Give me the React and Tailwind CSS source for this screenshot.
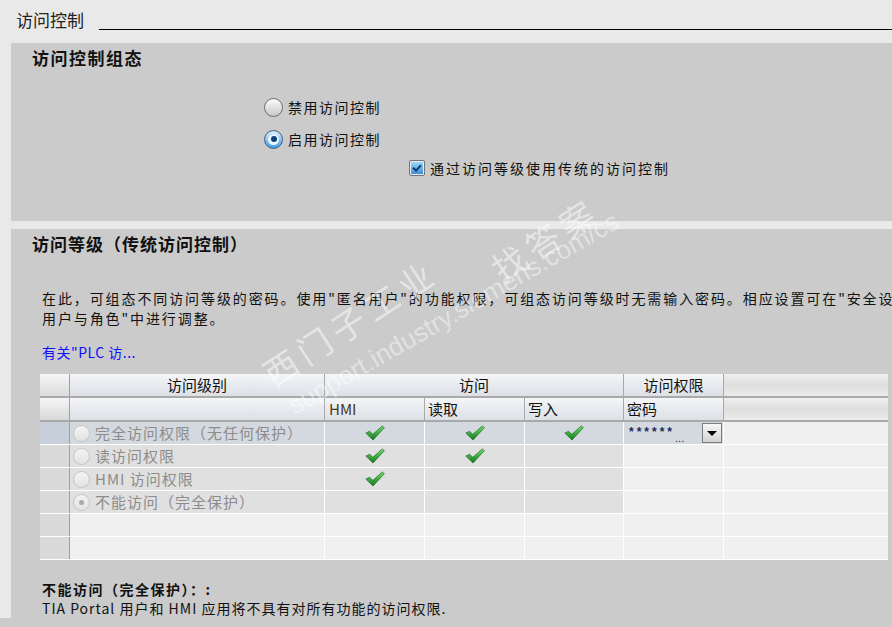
import React from "react";

const font = "font-['Noto_Sans_CJK_SC','Noto_Sans',sans-serif]";

const Radio = ({ checked, disabled }) => {
  if (disabled) {
    return (
      <div className="w-[17px] h-[17px] rounded-full border border-[#c4c4c4] bg-linear-to-b from-[#f4f4f4] to-[#e2e2e2] flex items-center justify-center shrink-0">
        {checked && <div className="w-[5px] h-[5px] rounded-full bg-[#a9a9a9]" />}
      </div>
    );
  }
  if (checked) {
    return (
      <div className="w-[19px] h-[19px] rounded-full border border-[#45607c] bg-linear-to-b from-[#d6f0ff] to-[#3a9be0] flex items-center justify-center shrink-0">
        <div className="w-[11px] h-[11px] rounded-full bg-[#eaf6ff] flex items-center justify-center">
          <div className="w-[6px] h-[6px] rounded-full bg-[#0f3f7c]" />
        </div>
      </div>
    );
  }
  return (
    <div className="w-[19px] h-[19px] rounded-full border border-[#6e6e6e] bg-linear-to-b from-[#fbfbfb] to-[#c9c9c9] shrink-0" />
  );
};

const Check = () => (
  <svg width="20" height="16" viewBox="0 0 19 15">
    <defs>
      <linearGradient id="gk" x1="0" y1="0" x2="0" y2="1">
        <stop offset="0" stopColor="#6ee06e" />
        <stop offset="1" stopColor="#117a1a" />
      </linearGradient>
    </defs>
    <path d="M0.8 7.6 L4.4 5.8 L7.4 8.8 L16.4 0.8 L18.4 2.4 L7.6 14.2 Z" fill="url(#gk)" stroke="#1b5e20" strokeWidth="0.6" />
  </svg>
);

const cols = "grid grid-cols-[30px_255px_100px_100px_99px_100px_164px]";

const rows = [
  { label: "完全访问权限（无任何保护）", hmi: true, read: true, write: true, pw: true, sel: true },
  { label: "读访问权限", hmi: true, read: true },
  { label: "HMI 访问权限", hmi: true },
  { label: "不能访问（完全保护）", checked: true },
];

const hdr = "bg-linear-to-b from-[#f5f6f8] via-[#e7eaee] to-[#dde1e6]";

const Table = () => (
  <div className="ml-[29px] w-[848px] text-[15px] leading-[20px] text-[#111]">
    {/* header row 1 */}
    <div className={`${cols} h-[24px] border-b-2 border-[#a9a9a9]`}>
      <div className="bg-linear-to-b from-[#f6f6f6] to-[#dcdcdc] border-r border-[#a0a0a0]" />
      <div className={`${hdr} border-r border-[#a9a9a9] flex items-center justify-center`}>访问级别</div>
      <div className={`${hdr} col-span-3 border-r border-[#a9a9a9] flex items-center justify-center`}>访问</div>
      <div className={`${hdr} border-r border-[#a9a9a9] flex items-center justify-center`}>访问权限</div>
      <div className="bg-linear-to-b from-[#f0f0f0] via-[#dedede] to-[#ececec]" />
    </div>
    {/* header row 2 */}
    <div className={`${cols} h-[24px] border-b-2 border-[#a9a9a9]`}>
      <div className="bg-linear-to-b from-[#f6f6f6] to-[#d8d8d8] border-r border-[#a0a0a0]" />
      <div className={`${hdr} border-r border-[#a9a9a9]`} />
      <div className={`${hdr} border-r border-[#a9a9a9] flex items-center pl-[4px] text-[#4a3a1a]`}>HMI</div>
      <div className={`${hdr} border-r border-[#a9a9a9] flex items-center pl-[3px]`}>读取</div>
      <div className={`${hdr} border-r border-[#a9a9a9] flex items-center pl-[3px]`}>写入</div>
      <div className={`${hdr} border-r border-[#a9a9a9] flex items-center pl-[3px]`}>密码</div>
      <div className="bg-linear-to-b from-[#f0f0f0] via-[#dedede] to-[#ececec]" />
    </div>
    {rows.map((r, i) => {
      const cell = r.sel ? "bg-[#d4d9df]" : "bg-[#e0e0e0]";
      return (
        <div key={i} className={`${cols} h-[23px] border-b border-white`}>
          <div className={`${r.sel ? "bg-[#c7d0da]" : "bg-[#dadada]"} border-r border-[#a0a0a0]`} />
          <div className={`${cell} border-r border-white flex items-center gap-[5px] pl-[3px] text-[#8c8c8c] tracking-[1px]`}>
            <Radio disabled checked={r.checked} />
            <span>{r.label}</span>
          </div>
          <div className={`${cell} border-r border-white flex items-center justify-center`}>{r.hmi && <Check />}</div>
          <div className={`${cell} border-r border-white flex items-center justify-center`}>{r.read && <Check />}</div>
          <div className={`${cell} border-r border-white flex items-center justify-center`}>{r.write && <Check />}</div>
          <div className={`${r.sel ? "bg-[#d4d9df]" : "bg-[#f0f0f0]"} border-r border-white flex items-start justify-between`}>
            {r.pw && (
              <>
                <span className="pl-[5px] pt-[4px] flex items-end font-['Liberation_Sans',sans-serif] text-[#1f2a5a]">
                  <span className="text-[12px] leading-[12px] tracking-[3px] font-bold">******</span>
                  <span className="text-[11px] leading-[12px] -mb-[6px]">...</span>
                </span>
                <div className="mt-[1px] mr-[1px] w-[20px] h-[20px] border border-[#7c7c7c] bg-linear-to-b from-[#f7f7f7] to-[#d3d3d3] flex items-center justify-center">
                  <div className="w-0 h-0 border-l-[5px] border-r-[5px] border-t-[5px] border-l-transparent border-r-transparent border-t-black" />
                </div>
              </>
            )}
          </div>
          <div className="bg-[#f0f0f0]" />
        </div>
      );
    })}
    {[0, 1].map((i) => (
      <div key={i} className={`${cols} h-[23px] border-b border-white`}>
        <div className="bg-[#dadada] border-r border-[#a0a0a0]" />
        <div className="bg-[#f0f0f0] border-r border-white" />
        <div className="bg-[#f0f0f0] border-r border-white" />
        <div className="bg-[#f0f0f0] border-r border-white" />
        <div className="bg-[#f0f0f0] border-r border-white" />
        <div className="bg-[#f0f0f0] border-r border-white" />
        <div className="bg-[#f0f0f0]" />
      </div>
    ))}
  </div>
);

export default function App() {
  return (
    <div className={`relative w-[892px] h-[627px] overflow-hidden bg-[#e9e9e9] flex flex-col ${font}`}>
      {/* page title */}
      <div className="h-[43px] flex items-start shrink-0">
        <span className="ml-[16px] mt-[8px] text-[17px] leading-[24px] text-[#222]">访问控制</span>
        <div className="flex-1 ml-[15px] mt-[29px] h-px bg-black" />
      </div>

      {/* panel 1 */}
      <div className="ml-[11px] h-[178px] bg-[#cbcbcb] shrink-0 text-[14px] text-[#111]">
        <div className="pl-[21px] pt-[3px] text-[17px] leading-[24px] font-bold tracking-[1.5px] text-[#111]">访问控制组态</div>
        <div className="ml-[253px] mt-[27px] flex items-center gap-[5px] h-[20px] tracking-[1.5px]">
          <Radio />
          <span>禁用访问控制</span>
        </div>
        <div className="ml-[253px] mt-[12px] flex items-center gap-[5px] h-[20px] tracking-[1.5px]">
          <Radio checked />
          <span>启用访问控制</span>
        </div>
        <div className="ml-[398px] mt-[9px] flex items-center gap-[5px] h-[20px] tracking-[2px]">
          <div className="w-[16px] h-[16px] rounded-[2px] border border-[#6f7378] bg-[#e9eef2] p-[1px] shrink-0">
            <div className="w-full h-full bg-linear-to-b from-[#9ad8f6] to-[#3f8fd2] flex items-center justify-center">
              <svg width="10" height="8" viewBox="0 0 10 8">
                <path d="M1 3.8 L4 6.6 L9 1.2" fill="none" stroke="#163a78" strokeWidth="2" />
              </svg>
            </div>
          </div>
          <span>通过访问等级使用传统的访问控制</span>
        </div>
      </div>

      {/* panel 2 */}
      <div className="ml-[11px] mt-[8px] flex-1 bg-[#cbcbcb] text-[14px] text-[#111]">
        <div className="pl-[21px] pt-[3px] text-[17px] leading-[24px] font-bold tracking-[1px]">访问等级（传统访问控制）</div>
        <div className="pl-[31px] mt-[32px] leading-[20px] tracking-[1.9px]">
          <div className="whitespace-nowrap overflow-hidden">在此，可组态不同访问等级的密码。使用"匿名用户"的功能权限，可组态访问等级时无需输入密码。相应设置可在"安全设置 &gt; 用户与角色"</div>
          <div>用户与角色"中进行调整。</div>
        </div>
        <div className="pl-[31px] mt-[14px] leading-[20px] text-[#1010ff] tracking-[0.5px]">有关"PLC 访...</div>
        <div className="mt-[12px]">
          <Table />
        </div>
        <div className="pl-[31px] mt-[20px] leading-[19px]">
          <div className="font-bold tracking-[1.5px]">不能访问（完全保护）：:</div>
          <div className="tracking-[1px]">TIA Portal 用户和 HMI 应用将不具有对所有功能的访问权限.</div>
        </div>
      </div>
      <div className="h-[12px] bg-[#cbcbcb] shrink-0" />

      {/* watermark */}
      <div className="absolute left-[250px] top-[305px] -rotate-[33deg] text-[34px] leading-none text-white/50 tracking-[6px] pointer-events-none">西门子工业</div>
      <div className="absolute left-[485px] top-[222px] -rotate-[33deg] text-[34px] leading-none text-white/50 tracking-[6px] pointer-events-none">找答案</div>
      <div className="absolute left-[265px] top-[300px] -rotate-[30deg] text-[26px] leading-none text-white/45 pointer-events-none font-['Liberation_Sans',sans-serif]">support.industry.siemens.com/cs</div>
    </div>
  );
}
